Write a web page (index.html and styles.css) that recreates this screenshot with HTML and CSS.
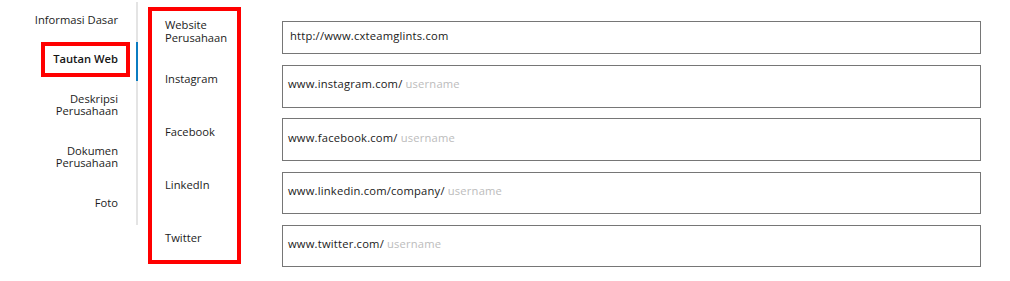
FILE: index.html
```html
<!DOCTYPE html>
<html lang="id">
<head>
<meta charset="utf-8">
<title>Tautan Web</title>
<link rel="stylesheet" href="styles.css">
</head>
<body>
<div class="page">
  <nav class="side-nav">
    <div class="nav-item"><span class="nav-label">Informasi Dasar</span></div>
    <div class="nav-item active"><span class="nav-label">Tautan Web</span></div>
    <div class="nav-item"><span class="nav-label">Deskripsi Perusahaan</span></div>
    <div class="nav-item"><span class="nav-label">Dokumen Perusahaan</span></div>
    <div class="nav-item"><span class="nav-label">Foto</span></div>
  </nav>

  <div class="labels">
    <div class="label">Website Perusahaan</div>
    <div class="label">Instagram</div>
    <div class="label">Facebook</div>
    <div class="label">LinkedIn</div>
    <div class="label label-last">Twitter</div>
  </div>

  <div class="fields">
    <div class="field field-main"><input class="field-input" type="text" value="http://www.cxteamglints.com"></div>
    <div class="field"><span class="prefix">www.instagram.com/</span><input class="field-input" type="text" placeholder="username"></div>
    <div class="field"><span class="prefix">www.facebook.com/</span><input class="field-input" type="text" placeholder="username"></div>
    <div class="field"><span class="prefix">www.linkedin.com/company/</span><input class="field-input" type="text" placeholder="username"></div>
    <div class="field"><span class="prefix">www.twitter.com/</span><input class="field-input" type="text" placeholder="username"></div>
  </div>
</div>
</body>
</html>
```

FILE: styles.css
```css
* {
  box-sizing: border-box;
}

html, body {
  margin: 0;
  padding: 0;
  background: #ffffff;
}

body {
  font-family: "Open Sans", "Liberation Sans", sans-serif;
  font-size: 11.2px;
  color: #1a1a1a;
}

.page {
  display: flex;
  align-items: flex-start;
}

/* ---------- side navigation ---------- */
.side-nav {
  width: 138px;
  margin-top: 2px;
  display: flex;
  flex-direction: column;
}

.nav-item {
  text-align: right;
  padding: 0.5px 0 4.5px;
  border-right: 2px solid #e4e4e4;
}

.nav-item.active {
  border-right-color: #0b7cc1;
}

.nav-label {
  display: inline-block;
  max-width: 124px;
  margin-right: 6px;
  padding: 7px 8px;
  border: 4px solid transparent;
  line-height: 12.6px;
  color: #1c1c1c;
}

.nav-item.active .nav-label {
  border-color: #ff0000;
  font-weight: 600;
  color: #151515;
}

/* ---------- labels column ---------- */
.labels {
  width: 93px;
  margin-left: 10px;
  margin-top: 7px;
  padding: 8.4px 0 15.1px 13px;
  border: 4px solid #ff0000;
  display: flex;
  flex-direction: column;
}

.label {
  height: 53.25px;
  line-height: 12.5px;
  color: #1c1c1c;
}

.label-last {
  height: auto;
}

/* ---------- fields column ---------- */
.fields {
  width: 699px;
  margin-left: 41px;
  padding-top: 21px;
  display: flex;
  flex-direction: column;
  gap: 10.75px;
}

.field {
  height: 42.5px;
  border: 1px solid #767676;
  display: flex;
  align-items: center;
  padding: 0 8px 5px 5px;
  letter-spacing: 0.2px;
}

.field-main {
  height: 33.25px;
  padding: 0 8px 4px 7px;
}

.prefix {
  line-height: 15px;
  white-space: nowrap;
  color: #1a1a1a;
}

.field-input {
  flex: 1;
  min-width: 0;
  height: 15px;
  margin: 0;
  padding: 0;
  border: 0;
  outline: none;
  background: transparent;
  font: inherit;
  letter-spacing: inherit;
  line-height: 15px;
  color: #1a1a1a;
}

.prefix + .field-input {
  margin-left: 3px;
}

.field-input::placeholder {
  color: #bcbcbc;
  opacity: 1;
}
```
